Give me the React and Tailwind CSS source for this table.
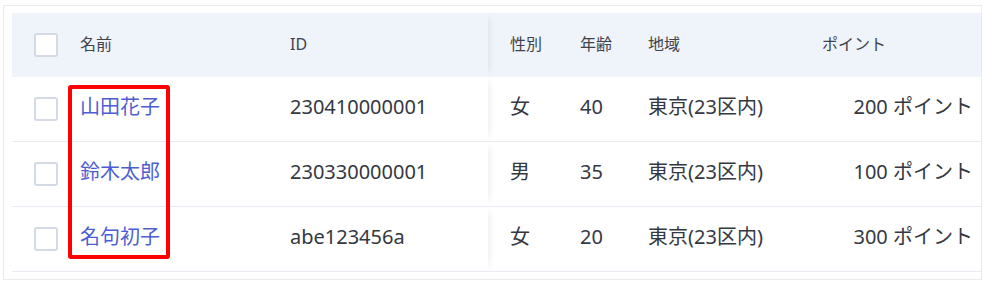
import React from "react";

const rows = [
  { name: "山田花子", id: "230410000001", sex: "女", age: "40", area: "東京(23区内)", pt: "200 ポイント" },
  { name: "鈴木太郎", id: "230330000001", sex: "男", age: "35", area: "東京(23区内)", pt: "100 ポイント" },
  { name: "名句初子", id: "abe123456a", sex: "女", age: "20", area: "東京(23区内)", pt: "300 ポイント" },
];

function Box() {
  return <div className="w-[24px] h-[24px] rounded-[3px] border-2 border-[#d3d9e5] bg-white" />;
}

export default function App() {
  return (
    <div
      className="relative w-[990px] h-[286px] bg-white pt-[5px] pl-[3px]"
      style={{ fontFamily: '"Noto Sans", "Noto Sans CJK JP", sans-serif' }}
    >
      <div className="w-[979px] h-[275px] border border-[#e8eaed] overflow-hidden pt-[7px] pl-[8px]">
        <div className="w-[985px]">
          {/* header */}
          <div className="flex h-[64px] items-center bg-[#eff3fa] text-[16px] leading-[24px] text-[#3f434a]">
            <div className="w-[56px] pl-[22px] flex items-center self-stretch"><Box /></div>
            <div className="w-[210px] pl-[12px] pb-[2px]">名前</div>
            <div className="w-[210px] pl-[12px] pb-[2px] self-stretch flex items-center relative z-10 shadow-[7px_0_7px_-6px_rgba(40,50,80,0.10)]">ID</div>
            <div className="w-[80px] pl-[22px] pb-[2px]">性別</div>
            <div className="w-[68px] pl-[12px] pb-[2px]">年齢</div>
            <div className="w-[174px] pl-[12px] pb-[2px]">地域</div>
            <div className="w-[175px] pl-[12px] pb-[2px]">ポイント</div>
          </div>
          {rows.map((r) => (
            <div key={r.id} className="flex h-[65px] items-center border-b border-[#e6eaf1] text-[20px] leading-[28px] text-[#343841]">
              <div className="w-[56px] pl-[22px] flex items-center self-stretch"><Box /></div>
              <div className="w-[210px] pl-[12px] pb-[4px] text-[#4d5ed2]">{r.name}</div>
              <div className="w-[210px] pl-[12px] pb-[4px] self-stretch flex items-center relative z-10 bg-white shadow-[7px_0_7px_-6px_rgba(40,50,80,0.10)]">{r.id}</div>
              <div className="w-[80px] pl-[22px] pb-[4px]">{r.sex}</div>
              <div className="w-[68px] pl-[12px] pb-[4px]">{r.age}</div>
              <div className="w-[174px] pl-[12px] pb-[4px]">{r.area}</div>
              <div className="w-[175px] pr-[12px] pb-[4px] text-right">{r.pt}</div>
            </div>
          ))}
        </div>
      </div>
      <div className="absolute left-[68px] top-[85px] w-[102px] h-[174px] border-4 border-[#ff0000] rounded-[3px] pointer-events-none" />
    </div>
  );
}
